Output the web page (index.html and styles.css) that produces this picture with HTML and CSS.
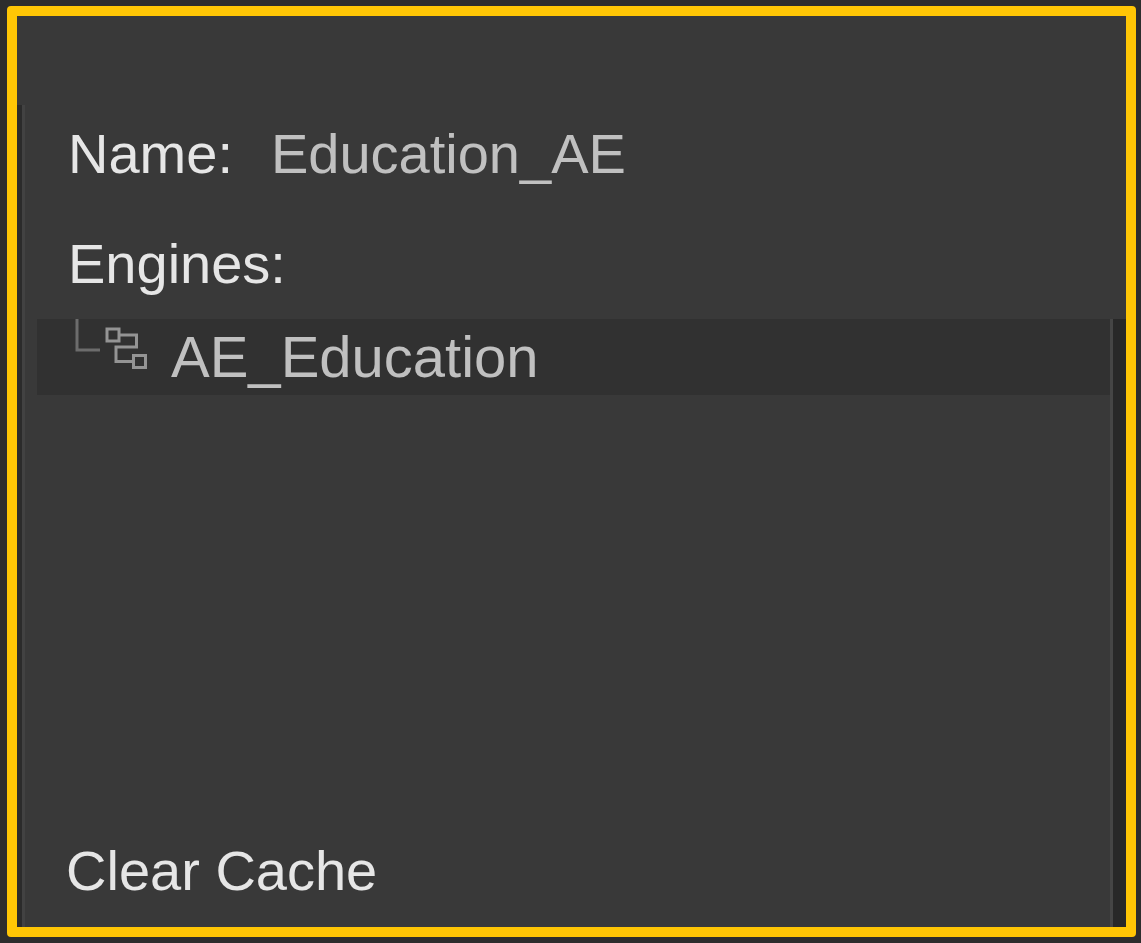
FILE: index.html
```html
<!DOCTYPE html>
<html lang="en">
<head>
<meta charset="utf-8">
<title>Education_AE</title>
<link rel="stylesheet" href="styles.css">
</head>
<body>
<main class="frame">
  <div class="topbar"></div>
  <section class="panel">
    <div class="details">
      <div class="field">
        <label class="label" for="name">Name:</label>
        <input class="value" id="name" type="text" value="Education_AE" readonly>
      </div>
      <h2 class="label" id="engines">Engines:</h2>
    </div>
    <div class="workspace">
      <div class="content">
        <ul class="tree" aria-labelledby="engines">
          <li class="engine">
            <svg class="icon" width="76" height="54" viewBox="0 0 76 54" fill="none" aria-hidden="true">
              <path d="M2 0V31H25" stroke="#6c6c6c" stroke-width="3"/>
              <g stroke="#949494" stroke-width="3">
                <rect x="32" y="10" width="12" height="12"/>
                <path d="M45 16H61.5V28H41V42.5H58"/>
                <rect x="58.5" y="36.5" width="12" height="12"/>
              </g>
            </svg>
            <span class="engine-name">AE_Education</span>
          </li>
        </ul>
        <button class="clear" type="button">Clear Cache</button>
      </div>
      <div class="gutter"></div>
    </div>
  </section>
</main>
</body>
</html>
```
FILE: styles.css
```css
* {
  box-sizing: border-box;
}

body {
  display: flex;
  min-height: 100vh;
  margin: 0;
  padding: 6px 5px 6px 7px;
  background: #2d2d2d;
  color: #e6e6e6;
  font: 56px/76px "Liberation Sans", Arial, sans-serif;
}

.frame {
  display: flex;
  flex: 1;
  flex-direction: column;
  min-width: 0;
  border: 10px solid #ffc605;
  border-radius: 4px;
  background: #393939;
}

.topbar {
  height: 89px;
}

.panel {
  display: flex;
  flex: 1;
  flex-direction: column;
  border-left: 5px solid #2b2b2b;
  box-shadow: inset 3px 0 #424242;
}

.details {
  display: flex;
  flex-direction: column;
  gap: 34px;
  padding: 11px 24px 17px 46px;
}

.field {
  display: flex;
  gap: 38px;
}

.label {
  margin: 0;
  font: inherit;
}

.value {
  flex: 1;
  min-width: 0;
  padding: 0;
  border: 0;
  outline: 0;
  background: none;
  color: #c0c0c0;
  font: inherit;
}

.workspace {
  display: flex;
  flex: 1;
}

.content {
  display: flex;
  flex: 1;
  flex-direction: column;
  justify-content: space-between;
  align-items: flex-start;
  padding: 0 0 18px 15px;
}

.tree {
  align-self: stretch;
  margin: 0;
  padding: 0;
  list-style: none;
}

.engine {
  display: flex;
  gap: 20px;
  padding-left: 38px;
  background: #313131;
  color: #c0c0c0;
  font-size: 58px;
}

.icon {
  flex: none;
}

.clear {
  margin-left: 29px;
  padding: 0;
  border: 0;
  background: none;
  color: inherit;
  font: inherit;
}

.gutter {
  width: 16px;
  border-left: 3px solid #454545;
  background: #282828;
}
```
